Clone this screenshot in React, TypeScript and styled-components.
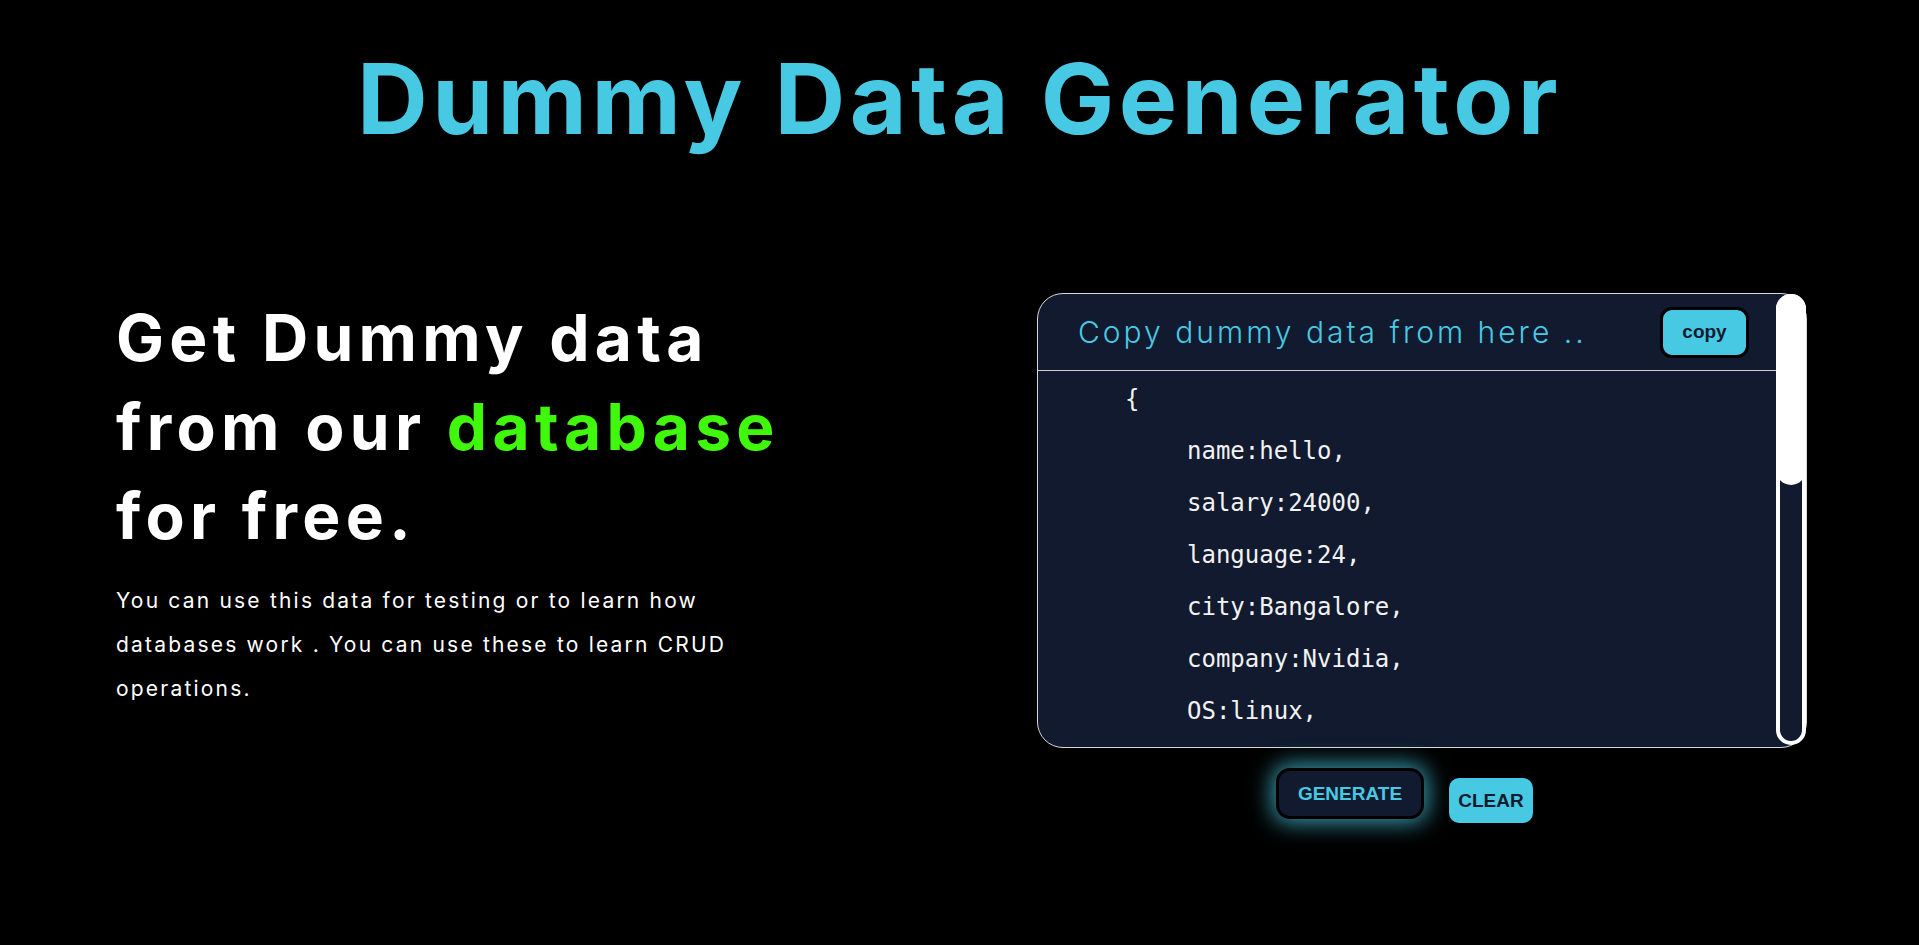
import React from "react";
import styled, { createGlobalStyle } from "styled-components";

const GlobalStyle = createGlobalStyle`
  * { box-sizing: border-box; }
  html, body { margin: 0; padding: 0; background: #000; }
  body { font-family: Inter, "Open Sans", sans-serif; color: #fff; }
`;

const CYAN = "#48c9e3";
const NAVY = "#111a2e";

const Page = styled.div`
  min-height: 945px;
  background: #000;
  padding-top: 50px;
`;

const Title = styled.h1`
  margin: 0;
  text-align: center;
  font-family: Inter, sans-serif;
  font-weight: 700;
  font-size: 98px;
  line-height: 98px;
  letter-spacing: 4.4px;
  color: ${CYAN};
`;

const Main = styled.main`
  display: flex;
  justify-content: space-between;
  align-items: flex-start;
  padding: 0 112px 0 116px;
  margin-top: 145px;
`;

const Intro = styled.section`
  width: 680px;
`;

const Heading = styled.h2`
  margin: 0;
  font-family: Inter, sans-serif;
  font-weight: 700;
  font-size: 64px;
  line-height: 89px;
  letter-spacing: 5.3px;
  color: #fff;
`;

const Accent = styled.span`
  color: #40f80c;
`;

const Text = styled.p`
  margin: 19px 0 0;
  font-family: Inter, sans-serif;
  font-weight: 400;
  font-size: 21px;
  line-height: 44px;
  letter-spacing: 2.2px;
  color: #fff;
`;

const Right = styled.section`
  width: 770px;
  display: flex;
  flex-direction: column;
`;

const Card = styled.div`
  height: 455px;
  display: flex;
  border: 1px solid #d8d8d8;
  border-radius: 26px;
  background: ${NAVY};
`;

const CardBody = styled.div`
  flex: 1;
  min-width: 0;
  overflow: hidden;
  border-radius: 25px 0 0 25px;
`;

const ScrollTrack = styled.div`
  flex-shrink: 0;
  width: 30px;
  margin-bottom: 2px;
  border: 4px solid #fff;
  border-radius: 15px;
  background: ${NAVY};
`;

const ScrollThumb = styled.div`
  height: 191px;
  margin: -4px -4px 0;
  border-radius: 15px;
  background: #fff;
`;

const CardHeader = styled.div`
  height: 77px;
  display: flex;
  align-items: center;
  justify-content: space-between;
  padding: 0 27px 0 40px;
  border-bottom: 1px solid #d0d0d0;
`;

const CardTitle = styled.span`
  font-family: Inter, sans-serif;
  font-weight: 300;
  font-size: 30px;
  letter-spacing: 3px;
  color: ${CYAN};
`;

const CopyButton = styled.button`
  width: 89px;
  height: 51px;
  border: 3px solid #000;
  border-radius: 12px;
  background: ${CYAN};
  color: ${NAVY};
  font-family: "Liberation Sans", Arial, sans-serif;
  font-weight: 700;
  font-size: 19px;
  cursor: pointer;
`;

const Code = styled.div`
  padding: 2px 0 0 87px;
  font-family: "DejaVu Sans Mono", monospace;
  font-size: 24px;
  line-height: 52px;
  color: #f2f2f2;
`;

const Line = styled.div<{ $indent?: boolean }>`
  white-space: pre;
  padding-left: ${(p) => (p.$indent ? "62px" : "0")};
`;

const ButtonRow = styled.div`
  display: flex;
  justify-content: center;
  align-items: flex-start;
  gap: 25px;
  padding-right: 35px;
  margin-top: 20px;
`;

const GenerateButton = styled.button`
  width: 148px;
  height: 51px;
  border: 3px solid #000;
  border-radius: 14px;
  background: ${NAVY};
  color: ${CYAN};
  font-family: "Liberation Sans", Arial, sans-serif;
  font-weight: 700;
  font-size: 19px;
  box-shadow: 0 0 22px 4px rgba(72, 201, 227, 0.75);
  cursor: pointer;
`;

const ClearButton = styled.button`
  margin-top: 10px;
  width: 84px;
  height: 45px;
  border: none;
  border-radius: 10px;
  background: ${CYAN};
  color: ${NAVY};
  font-family: "Liberation Sans", Arial, sans-serif;
  font-weight: 700;
  font-size: 19px;
  cursor: pointer;
`;

const lines: { text: string; indent: boolean }[] = [
  { text: "{", indent: false },
  { text: "name:hello,", indent: true },
  { text: "salary:24000,", indent: true },
  { text: "language:24,", indent: true },
  { text: "city:Bangalore,", indent: true },
  { text: "company:Nvidia,", indent: true },
  { text: "OS:linux,", indent: true },
];

export default function App() {
  return (
    <Page>
      <GlobalStyle />
      <Title>Dummy Data Generator</Title>
      <Main>
        <Intro>
          <Heading>
            Get Dummy data
            <br />
            from our <Accent>database</Accent>
            <br />
            for free.
          </Heading>
          <Text>
            You can use this data for testing or to learn how
            <br />
            databases work . You can use these to learn CRUD
            <br />
            operations.
          </Text>
        </Intro>
        <Right>
          <Card>
            <CardBody>
              <CardHeader>
                <CardTitle>Copy dummy data from here ..</CardTitle>
                <CopyButton>copy</CopyButton>
              </CardHeader>
              <Code>
                {lines.map((l, i) => (
                  <Line key={i} $indent={l.indent}>
                    {l.text}
                  </Line>
                ))}
              </Code>
            </CardBody>
            <ScrollTrack>
              <ScrollThumb />
            </ScrollTrack>
          </Card>
          <ButtonRow>
            <GenerateButton>GENERATE</GenerateButton>
            <ClearButton>CLEAR</ClearButton>
          </ButtonRow>
        </Right>
      </Main>
    </Page>
  );
}
